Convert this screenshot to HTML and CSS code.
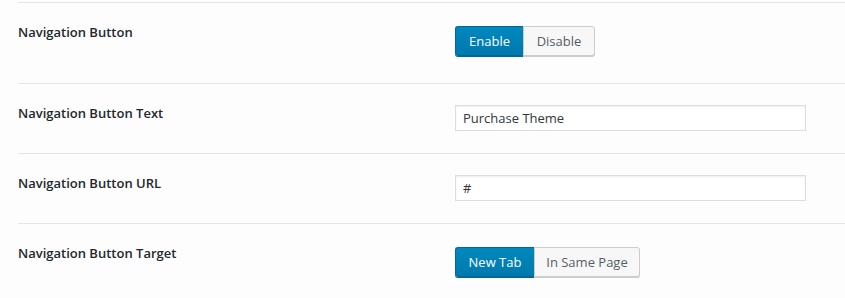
FILE: index.html
```html
<!DOCTYPE html>
<html lang="en">
<head>
    <meta charset="UTF-8">
    <meta name="viewport" content="width=device-width, initial-scale=1.0">
    <title>Navigation Settings</title>
    <link rel="stylesheet" href="styles.css">
</head>
<body>
    <div class="settings">
        <div class="row">
            <div class="label">Navigation Button</div>
            <div class="control">
                <div class="toggle">
                    <button class="toggle-btn active">Enable</button>
                    <button class="toggle-btn">Disable</button>
                </div>
            </div>
        </div>
        <div class="row">
            <div class="label">Navigation Button Text</div>
            <div class="control">
                <input type="text" class="text-input" value="Purchase Theme">
            </div>
        </div>
        <div class="row">
            <div class="label">Navigation Button URL</div>
            <div class="control">
                <input type="text" class="text-input" value="#">
            </div>
        </div>
        <div class="row">
            <div class="label">Navigation Button Target</div>
            <div class="control">
                <div class="toggle">
                    <button class="toggle-btn active btn-newtab">New Tab</button>
                    <button class="toggle-btn btn-samepage">In Same Page</button>
                </div>
            </div>
        </div>
    </div>
</body>
</html>
```

FILE: styles.css
```css
body {
    font-family: "Open Sans", "Noto Sans", Arial, sans-serif;
    background-color: #fdfdfd;
    margin: 0;
    padding: 0;
}
.settings {
    margin-top: 2px;
    padding-left: 18px;
}
.row {
    display: flex;
    border-top: 1px solid #e5e5e5;
    padding: 21px 0 22px;
}
.label {
    width: 437px;
    flex-shrink: 0;
    font-size: 13px;
    font-weight: 600;
    color: #23282d;
    line-height: 18px;
    margin-top: -1px;
}
.control {
    flex: 1;
}
.toggle {
    display: flex;
    margin: 2px 0 5px;
}
.toggle-btn {
    font-family: inherit;
    font-size: 13px;
    height: 30px;
    padding: 0;
    width: 72px;
    background-color: #f7f7f7;
    border: 1px solid #cccccc;
    color: #555d66;
    box-shadow: 0 1px 0 #cccccc;
    cursor: pointer;
    border-radius: 0 3px 3px 0;
}
.toggle-btn.active {
    width: 68px;
    background: linear-gradient(#0088bf, #0079ad);
    border-color: #006799;
    color: #ffffff;
    box-shadow: 0 1px 0 #006799;
    border-radius: 3px 0 0 3px;
    border-right: none;
}
.btn-newtab.active {
    width: 79px;
}
.btn-samepage {
    width: 106px;
}
.text-input {
    display: block;
    width: 351px;
    height: 26px;
    box-sizing: border-box;
    border: 1px solid #dddddd;
    box-shadow: inset 0 1px 2px rgba(0, 0, 0, 0.07);
    background-color: #ffffff;
    font-family: inherit;
    font-size: 13px;
    color: #32373c;
    padding: 0 7px;
    margin: 0;
    outline: none;
}
```
